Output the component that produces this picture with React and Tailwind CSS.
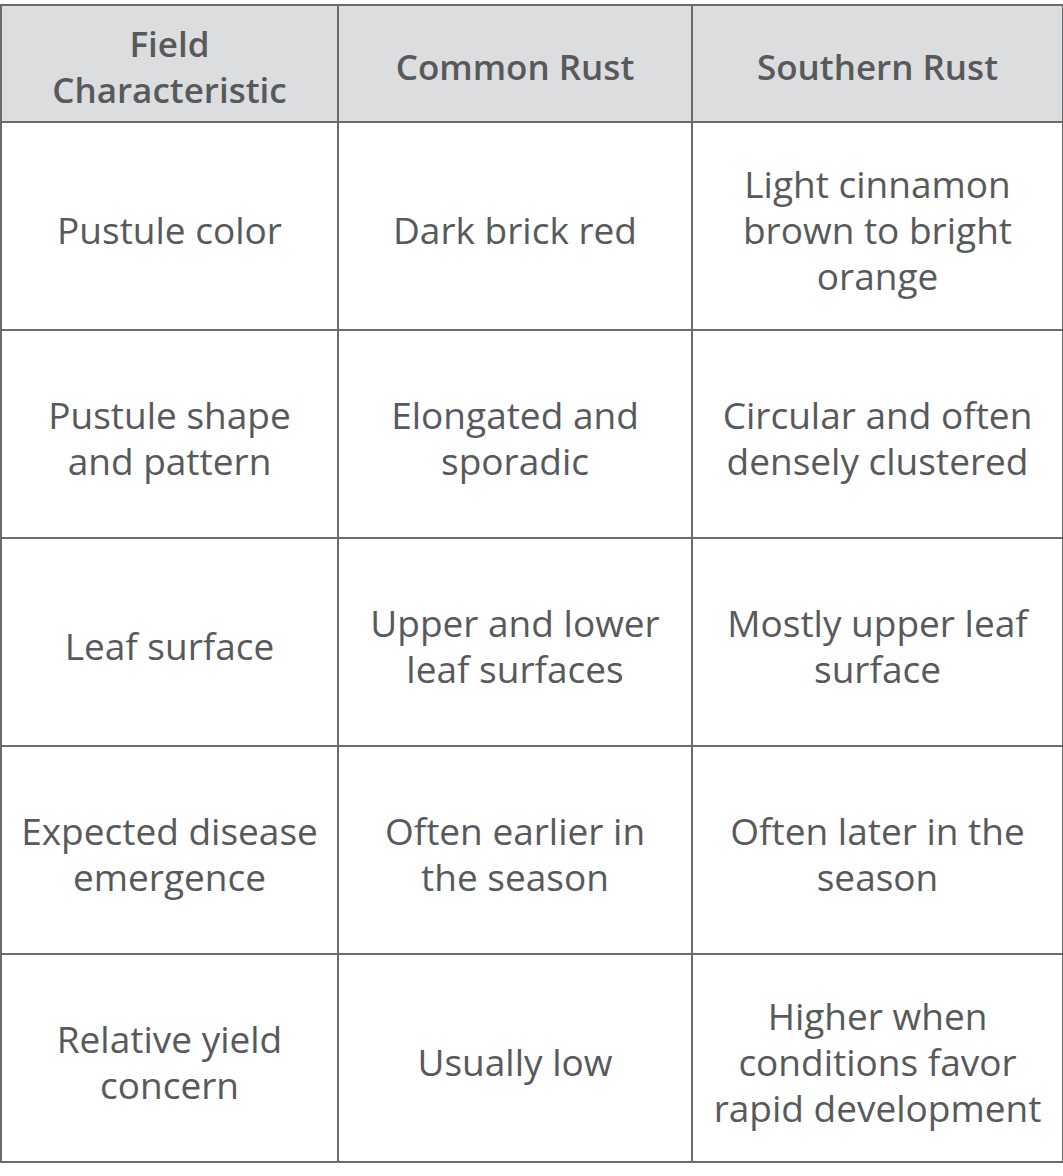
export default function App() {
  const rows = [
    [["Pustule color"], ["Dark brick red"], ["Light cinnamon", "brown to bright", "orange"]],
    [["Pustule shape", "and pattern"], ["Elongated and", "sporadic"], ["Circular and often", "densely clustered"]],
    [["Leaf surface"], ["Upper and lower", "leaf surfaces"], ["Mostly upper leaf", "surface"]],
    [["Expected disease", "emergence"], ["Often earlier in", "the season"], ["Often later in the", "season"]],
    [["Relative yield", "concern"], ["Usually low"], ["Higher when", "conditions favor", "rapid development"]],
  ];
  const cell = "border-2 border-[#6b6b6b] text-center align-middle px-0 whitespace-nowrap";
  const lines = (arr) => arr.map((l, k) => <div key={k}>{l}</div>);
  return (
    <div className="bg-white w-[1063px] h-[1176px] pt-[4px]" style={{ fontFamily: '"Open Sans", sans-serif' }}>
      <table className="border-collapse table-fixed w-[1062px] text-[#58595b]">
        <colgroup>
          <col className="w-[337px]" />
          <col className="w-[354px]" />
          <col className="w-[371px]" />
        </colgroup>
        <thead>
          <tr className="h-[117px] bg-[#dcdddf]">
            <th className={cell + " text-[35px] leading-[46px] font-semibold pt-[6px]"}>{lines(["Field", "Characteristic"])}</th>
            <th className={cell + " text-[35px] leading-[46px] font-semibold pt-[6px]"}>Common Rust</th>
            <th className={cell + " text-[35px] leading-[46px] font-semibold pt-[6px]"}>Southern Rust</th>
          </tr>
        </thead>
        <tbody>
          {rows.map((r, i) => (
            <tr key={i} className="h-[208px]">
              {r.map((c, j) => (
                <td key={j} className={cell + " text-[37px] leading-[46px] font-[370] pt-[8px]"}>{lines(c)}</td>
              ))}
            </tr>
          ))}
        </tbody>
      </table>
    </div>
  );
}
